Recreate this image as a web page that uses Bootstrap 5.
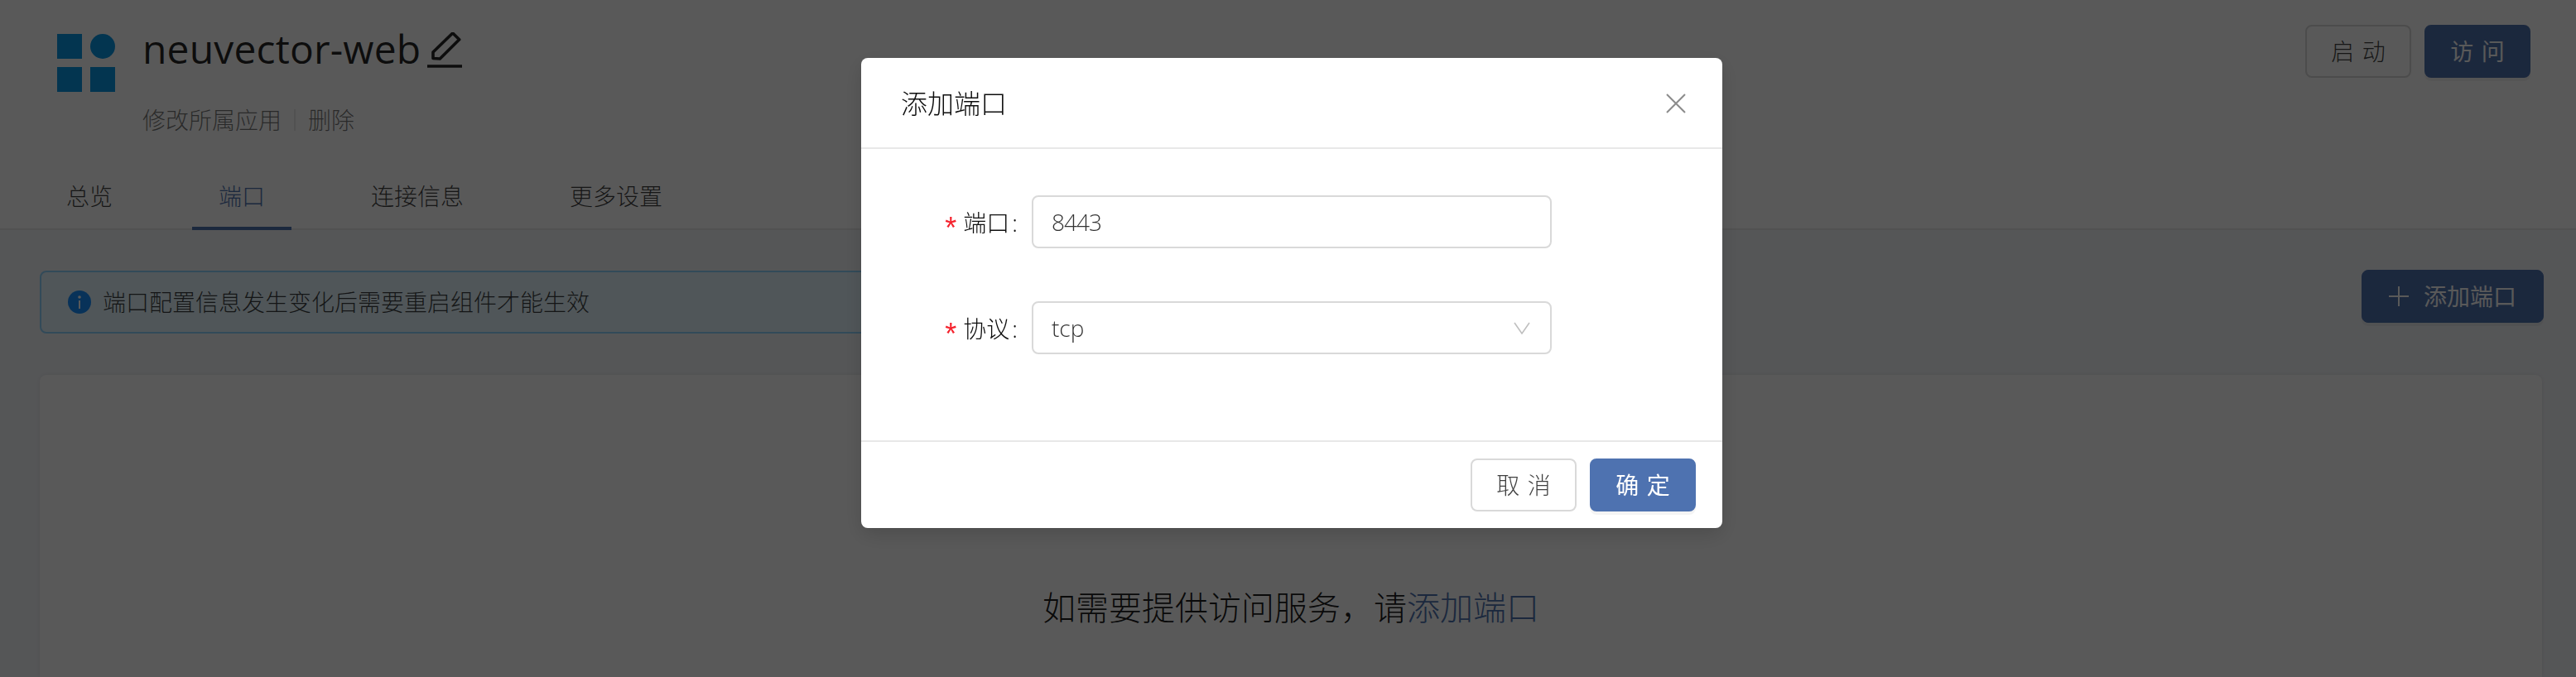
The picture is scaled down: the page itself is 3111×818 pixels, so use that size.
<!DOCTYPE html>
<html lang="zh-CN">
<head>
<meta charset="UTF-8">
<title>neuvector-web</title>
<link href="https://cdn.jsdelivr.net/npm/bootstrap@5.3.1/dist/css/bootstrap.min.css" rel="stylesheet">
<style>
    html, body { height: 100%; overflow: hidden; }
    body {
        background: #f3f5f9;
        font-family: "Open Sans", "Noto Sans CJK SC", sans-serif;
        font-size: 28px;
        font-weight: 300;
        color: rgba(0, 0, 0, .75);
    }
    .app-head { background: #fff; height: 278px; border-bottom: 2px solid #e8e8e8; }
    .head-top { height: 196px; padding: 30px 55px 0 69px; }
    .head-info { padding-top: 11px; }
    .app-logo { width: 70px; height: 70px; margin-right: 33px; flex: none; }
    .app-title { font-size: 48px; line-height: 34px; color: rgba(0, 0, 0, .85); margin: -2px 0 0; font-weight: 400; letter-spacing: .15px; }
    .app-title svg { width: 44px; height: 44px; vertical-align: -6px; margin-left: 8px; }
    .app-subs { margin-top: 47px; line-height: 30px; color: rgba(0, 0, 0, .55); }
    .sub-sep { width: 2px; height: 26px; background: #e8e8e8; margin: 0 15px; }
    .dlg-btn {
        --bs-btn-padding-x: 0;
        --bs-btn-padding-y: 0;
        --bs-btn-font-size: 28px;
        --bs-btn-font-weight: 300;
        --bs-btn-border-radius: 8px;
        --bs-btn-border-width: 2px;
        width: 128px;
        height: 64px;
        letter-spacing: .34em;
        text-indent: .34em;
        line-height: 58px;
    }
    .btn-pale { background: #fff; border-color: #d9d9d9; color: rgba(0, 0, 0, .75); }
    .btn-brand { background: #4e72b0; border-color: #4e72b0; color: #fff; box-shadow: 0 4px 0 rgba(0, 0, 0, .045); }
    .btn-brand:hover { background: #4e72b0; color: #fff; }
    .dlg-btn.btn-brand, .add-btn { --bs-btn-font-weight: 400; }
    .app-tabs { margin-left: 48px; gap: 64px; }
    .app-tabs .nav-link {
        padding: 0 32px;
        height: 82px;
        line-height: 82px;
        color: rgba(0, 0, 0, .75);
        border-bottom: 4px solid transparent;
    }
    .app-tabs .nav-link.active { color: #4e72b0; border-bottom-color: #4e72b0; }
    .app-main { padding: 48px 41px 0 48px; }
    .tip-box {
        width: 1400px;
        height: 76px;
        background: #e6f7ff;
        border: 2px solid #91d5ff;
        border-radius: 8px;
        padding-left: 32px;
        margin: 1px 0 0;
    }
    .tip-box svg { width: 28px; height: 28px; margin-right: 14px; flex: none; }
    .add-btn {
        --bs-btn-padding-x: 0;
        --bs-btn-padding-y: 0;
        --bs-btn-font-size: 28px;
        --bs-btn-border-radius: 8px;
        width: 220px;
        height: 64px;
        margin-right: -2px;
    }
    .add-btn svg { width: 24px; height: 24px; margin-right: 18px; }
    .port-empty {
        margin-top: 50px;
        height: 365px;
        border: 0;
        border-radius: 8px 8px 0 0;
        background: #fff;
        box-shadow: 0 0 4px rgba(0, 0, 0, .08);
        padding-top: 253px;
        font-size: 40px;
        line-height: 56px;
        color: rgba(0, 0, 0, .9);
    }
    .port-empty a { color: #4e72b0; text-decoration: none; }
    .dim-layer { --bs-backdrop-opacity: .65; }
    .port-dialog { --bs-modal-width: 1040px; margin: 70px 0 0 1040px; }
    .port-dialog .modal-content {
        border: 0;
        border-radius: 8px;
        height: 568px;
        box-shadow: 0 8px 24px rgba(0, 0, 0, .15);
    }
    .port-dialog .modal-header {
        height: 110px;
        padding: 2px 44px 0 48px;
        border-bottom: 2px solid #e8e8e8;
    }
    .port-dialog .modal-title { font-size: 32px; line-height: 44px; color: rgba(0, 0, 0, .95); font-weight: 300; }
    .x-btn { background: none; border: 0; padding: 0; line-height: 0; }
    .x-btn svg { width: 24px; height: 24px; }
    .port-dialog .modal-body { padding: 56px 0 0; }
    .form-line { height: 64px; margin-bottom: 64px; }
    .form-line label { width: 206px; padding-right: 17px; padding-top: 2px; text-align: right; color: rgba(0, 0, 0, .95); margin: 0; }
    .req-mark { color: #f5222d; margin-right: 8px; font-family: "Liberation Sans", sans-serif; font-size: 36px; line-height: 0; vertical-align: -8px; }
    .label-colon { margin-left: 3px; }
    .port-input {
        width: 628px;
        height: 64px;
        border: 2px solid #d9d9d9;
        border-radius: 8px;
        padding: 0 22px;
        font-size: 28px;
        font-weight: 300;
        color: rgba(0, 0, 0, .8);
    }
    #portNo { letter-spacing: -1px; }
    .port-select {
        background-image: url("data:image/svg+xml,%3csvg xmlns='http://www.w3.org/2000/svg' viewBox='0 0 20 15'%3e%3cpath fill='none' stroke='%23bfbfbf' stroke-width='1.6' d='M1 1l9 13 9-13'/%3e%3c/svg%3e");
        background-size: 20px 15px;
        background-position: right 24px center;
    }
    .port-dialog .modal-footer {
        height: 106px;
        padding: 0 32px;
        gap: 16px;
        border-top: 2px solid #e8e8e8;
        align-items: center;
    }
    .port-dialog .modal-footer > * { margin: 0; }
</style>
</head>
<body>
    <header class="app-head">
        <div class="head-top d-flex justify-content-between align-items-start">
            <div class="head-info d-flex">
                <svg class="app-logo" viewBox="0 0 70 70">
                    <rect width="30" height="30" fill="#0997e5"/>
                    <circle cx="55" cy="15" r="15" fill="#0997e5"/>
                    <rect y="40" width="30" height="30" fill="#0997e5"/>
                    <rect x="40" y="40" width="30" height="30" fill="#0997e5"/>
                </svg>
                <div>
                    <h1 class="app-title">neuvector-web<svg viewBox="0 0 44 44"><path fill="none" stroke="currentColor" stroke-width="3.6" stroke-linejoin="round" d="M7 31.5V24L30.700 1l8 7.700L15.300 32z"/><path fill="none" stroke="currentColor" stroke-width="3.6" d="M0 41h42"/></svg></h1>
                    <div class="app-subs d-flex align-items-center">
                        <span>修改所属应用</span><span class="sub-sep"></span><span>删除</span>
                    </div>
                </div>
            </div>
            <div class="d-flex gap-3">
                <button type="button" class="btn btn-pale dlg-btn">启动</button>
                <button type="button" class="btn btn-brand dlg-btn">访问</button>
            </div>
        </div>
        <ul class="nav app-tabs">
            <li class="nav-item"><a class="nav-link" href="#">总览</a></li>
            <li class="nav-item"><a class="nav-link active" href="#">端口</a></li>
            <li class="nav-item"><a class="nav-link" href="#">连接信息</a></li>
            <li class="nav-item"><a class="nav-link" href="#">更多设置</a></li>
        </ul>
    </header>

    <main class="app-main">
        <div class="d-flex justify-content-between align-items-start">
            <div class="tip-box d-flex align-items-center">
                <svg viewBox="0 0 28 28">
                    <circle cx="14" cy="14" r="14" fill="#1890ff"/>
                    <circle cx="14" cy="8" r="1.800" fill="#fff"/>
                    <rect x="13" y="12" width="2" height="10" fill="#fff"/>
                </svg>
                <span>端口配置信息发生变化后需要重启组件才能生效</span>
            </div>
            <button type="button" class="btn btn-brand add-btn d-flex align-items-center justify-content-center">
                <svg viewBox="0 0 24 24"><path fill="none" stroke="currentColor" stroke-width="2" d="M12 0v24M0 12h24"/></svg>添加端口
            </button>
        </div>
        <div class="card port-empty text-center">
            <div>如需要提供访问服务，请<a href="#">添加端口</a></div>
        </div>
    </main>

    <div class="modal-backdrop show dim-layer"></div>
    <div class="modal d-block">
        <div class="modal-dialog port-dialog">
            <div class="modal-content">
                <div class="modal-header">
                    <h5 class="modal-title">添加端口</h5>
                    <button type="button" class="x-btn ms-auto" aria-label="Close">
                        <svg viewBox="0 0 24 24"><path fill="none" stroke="#8c8c8c" stroke-width="2" d="M1 1l22 22M23 1L1 23"/></svg>
                    </button>
                </div>
                <div class="modal-body">
                    <div class="form-line d-flex align-items-center">
                        <label for="portNo"><span class="req-mark">*</span>端口<span class="label-colon">:</span></label>
                        <input id="portNo" class="form-control port-input" value="8443">
                    </div>
                    <div class="form-line d-flex align-items-center">
                        <label for="portProto"><span class="req-mark">*</span>协议<span class="label-colon">:</span></label>
                        <select id="portProto" class="form-select port-input port-select"><option>tcp</option></select>
                    </div>
                </div>
                <div class="modal-footer">
                    <button type="button" class="btn btn-pale dlg-btn">取消</button>
                    <button type="button" class="btn btn-brand dlg-btn">确定</button>
                </div>
            </div>
        </div>
    </div>
    <script src="https://cdn.jsdelivr.net/npm/bootstrap@5.3.1/dist/js/bootstrap.bundle.min.js"></script>
</body>
</html>
